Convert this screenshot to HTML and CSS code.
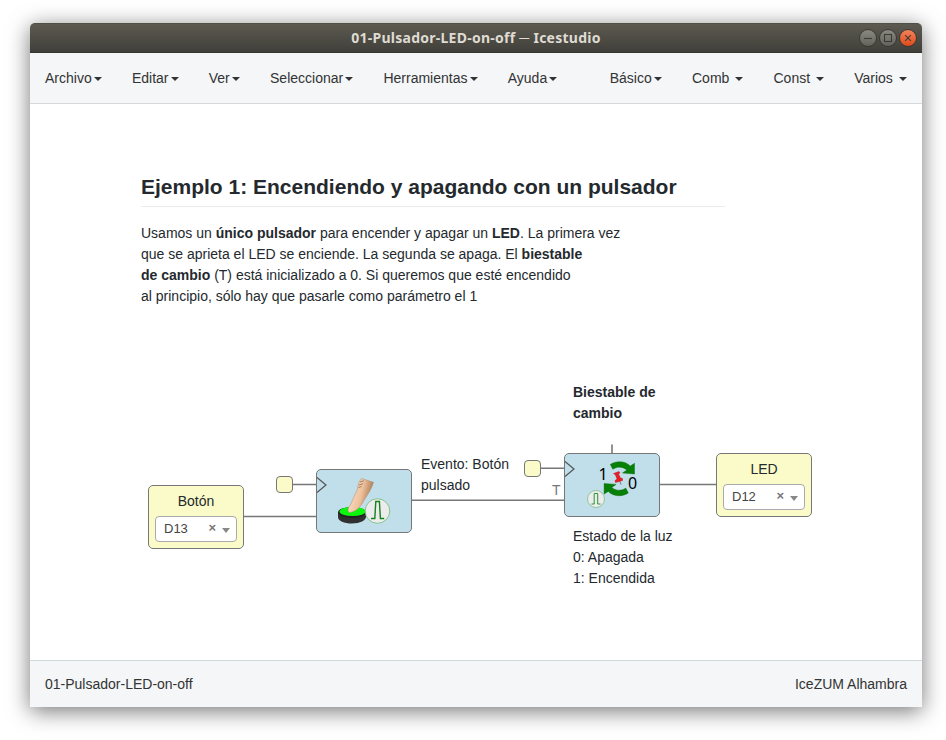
FILE: index.html
```html
<!DOCTYPE html>
<html lang="es">
<head>
<meta charset="utf-8">
<title>01-Pulsador-LED-on-off ─ Icestudio</title>
<link rel="stylesheet" href="styles.css">
</head>
<body>
<div class="window">
  <header class="titlebar">
    <h1 class="titlebar-text">01-Pulsador-LED-on-off ─ Icestudio</h1>
    <div class="controls">
      <svg viewBox="0 0 60 20" width="60" height="20">
        <defs>
          <linearGradient id="grey" x1="0" y1="0" x2="0" y2="1"><stop offset="0" stop-color="#8b8a82"/><stop offset="1" stop-color="#62615a"/></linearGradient>
          <linearGradient id="orange" x1="0" y1="0" x2="0" y2="1"><stop offset="0" stop-color="#f4835e"/><stop offset="1" stop-color="#de4a17"/></linearGradient>
        </defs>
        <g stroke="#383732">
          <circle cx="10" cy="10" r="8.5" fill="url(#grey)"/>
          <circle cx="30" cy="10" r="8.5" fill="url(#grey)"/>
          <circle cx="50" cy="10" r="8.5" fill="url(#orange)"/>
        </g>
        <g fill="none" stroke="#3c3b37" stroke-width="1.1">
          <path d="M6 10.5h8"/>
          <rect x="26.500" y="6.500" width="7" height="7"/>
          <path d="M47.200 7.200l5.600 5.600M52.800 7.200l-5.600 5.600"/>
        </g>
      </svg>
    </div>
  </header>
  <nav class="menubar">
    <ul class="menu">
      <li>Archivo<b class="caret"></b></li>
      <li>Editar<b class="caret"></b></li>
      <li>Ver<b class="caret"></b></li>
      <li>Seleccionar<b class="caret"></b></li>
      <li>Herramientas<b class="caret"></b></li>
      <li>Ayuda<b class="caret"></b></li>
    </ul>
    <ul class="menu">
      <li>Básico<b class="caret"></b></li>
      <li>Comb <b class="caret"></b></li>
      <li>Const <b class="caret"></b></li>
      <li>Varios <b class="caret"></b></li>
    </ul>
  </nav>
  <main class="canvas">
    <svg class="wires" viewBox="0 0 892 556" width="892" height="556">
      <g fill="none" stroke="#777" stroke-width="1.600">
        <path d="M214 412.500H286M262 380.500H286M382 396.300H534M510 364.300H534M630 380.500H686"/>
        <path d="M582 340.500V349"/>
      </g>
    </svg>

    <article class="note intro">
      <h2>Ejemplo 1: Encendiendo y apagando con un pulsador</h2>
      <p>Usamos un <strong>único pulsador</strong> para encender y apagar un <strong>LED</strong>. La primera vez<br>
      que se aprieta el LED se enciende. La segunda se apaga. El <strong>biestable<br>
      de cambio</strong> (T) está inicializado a 0. Si queremos que esté encendido<br>
      al principio, sólo hay que pasarle como parámetro el 1</p>
    </article>
    <p class="note event">Evento: Botón<br>pulsado</p>
    <p class="note toggle"><strong>Biestable de<br>cambio</strong></p>
    <p class="note state">Estado de la luz<br>0: Apagada<br>1: Encendida</p>
    <span class="port-label">T</span>

    <section class="block io button-in">
      <span>Botón</span>
      <div class="select"><span>D13</span><b class="clear">×</b><i class="arrow"></i></div>
    </section>
    <section class="block io led-out">
      <span>LED</span>
      <div class="select"><span>D12</span><b class="clear">×</b><i class="arrow"></i></div>
    </section>
    <div class="clock clock-a"></div>
    <div class="clock clock-b"></div>

    <section class="block logic pulse">
      <svg viewBox="0 0 96 64" width="96" height="64">
        <defs>
          <linearGradient id="skin" x1="0" y1="0" x2="1" y2="0.300"><stop offset="0.200" stop-color="#f8d9bd"/><stop offset="0.600" stop-color="#eec19c"/><stop offset="1" stop-color="#a77955"/></linearGradient>
        </defs>
        <path d="M1 8.500L10 16L1 23.500" fill="none" stroke="#555" stroke-width="1.200"/>
        <path d="M22 43.500v4.500c0 4 6 6.500 14 6.500s14-3 14-7v-4z" fill="#303030"/>
        <ellipse cx="36" cy="43.500" rx="14" ry="5.500" fill="#222"/>
        <ellipse cx="36.500" cy="42.500" rx="13" ry="4.500" fill="#0cf50c"/>
        <path d="M45.500 9.500L57.500 13.300C55.500 21 50.500 27 46.500 34C44 38.500 39 43 33.500 43.500C31 42 32 39 34.500 35.500L41.500 20C42 15 43 12 45.500 9.500z" fill="url(#skin)" stroke="#b08a6b" stroke-width=".5"/>
        <path d="M44 13l4-1.300M43 16l4-1.300M42.500 18.500l3-1" stroke="#7c6555" stroke-width=".7"/>
        <circle cx="61.500" cy="42" r="12.300" fill="#ececec" stroke="#6fba72" stroke-width=".8"/>
        <path d="M55 49.500h3.800l1-17h3.600l1 17h3.800" fill="none" stroke="#14821d" stroke-width="1.400"/>
      </svg>
    </section>
    <section class="block logic flipflop">
      <svg viewBox="0 0 96 64" width="96" height="64">
        <path d="M1 8.500L10 16L1 23.500" fill="none" stroke="#555" stroke-width="1.200"/>
        <g fill="#068006" stroke="#046404" stroke-width=".4">
          <path id="swap" d="M46.300 11.500C52 7.500 61 7.500 66.300 13L70.500 10.300V21L58.500 20L62.800 17C59.500 14 53.500 12.800 48.800 16.300z"/>
          <use href="#swap" transform="rotate(180 55.300 25.700)"/>
        </g>
        <g fill="#ed1c24" stroke="#a80d12" stroke-width=".4">
          <path d="M54.500 25L57 31.500" stroke="#777" stroke-width="1"/>
          <path d="M49.500 20.500L55 18.500L56 20L54.500 21L56.500 25L58.500 25.500L58.500 27.500L51.500 29.500L51 27.500L53 26L51.500 22z"/>
        </g>
        <text class="digit" x="34.500" y="27">1</text>
        <text class="digit" x="64" y="36">0</text>
        <circle cx="32" cy="46" r="8.500" fill="#ececec" stroke="#80bd83" stroke-width=".8"/>
        <path d="M27.500 51h2.700V40.500h3.500V51h2.800" fill="none" stroke="#2c9136"/>
      </svg>
    </section>
  </main>
  <footer class="statusbar"><span>01-Pulsador-LED-on-off</span><span>IceZUM Alhambra</span></footer>
</div>
</body>
</html>
```

FILE: styles.css
```css
* { box-sizing: border-box; }

body {
  margin: 0;
  padding: 23px 24px 33px 30px;
  height: 740px;
  overflow: hidden;
  background: #fff;
  color: #24292e;
  font: 14px/21px "Liberation Sans", Arial, sans-serif;
}

.window {
  display: flex;
  flex-direction: column;
  height: 684px;
  border-radius: 5px 5px 0 0;
  background: #fff;
  box-shadow: 0 4px 22px rgba(0, 0, 0, .55);
}

.titlebar {
  display: grid;
  grid-template-columns: 1fr auto 1fr;
  align-items: center;
  height: 30px;
  border-top: 1px solid #504f45;
  border-bottom: 1px solid #36352f;
  border-radius: 5px 5px 0 0;
  background: linear-gradient(#5c5a50, #403f3a);
}

.titlebar-text {
  grid-column: 2;
  margin: 0;
  color: #dfdbd2;
  font: bold 14px/28px "Noto Sans", "Open Sans", sans-serif;
  letter-spacing: .26px;
  white-space: nowrap;
}

.controls {
  justify-self: end;
  height: 20px;
  padding-right: 4px;
}

.controls svg { display: block; }

.menubar {
  display: flex;
  justify-content: space-between;
  height: 51px;
  border-bottom: 1px solid #d5d8dc;
  background: #f4f6f8;
  color: #333;
}

.menu {
  display: flex;
  margin: 0;
  padding: 0;
  list-style: none;
}

.menu li {
  padding: 15px;
  line-height: 20px;
  white-space: nowrap;
}

.caret {
  display: inline-block;
  margin-left: 2.25px;
  vertical-align: middle;
  border: 4px solid transparent;
  border-top-color: #333;
  border-bottom: 0;
}

.canvas {
  position: relative;
  flex: 1;
}

.wires { display: block; }

.note {
  position: absolute;
  margin: 0;
  white-space: nowrap;
}

.intro { left: 111px; top: 70px; width: 584px; }
.event { left: 391px; top: 350px; }
.toggle { left: 543px; top: 278px; }
.state { left: 543px; top: 422px; }

.intro h2 {
  margin: 0 0 16px;
  padding-bottom: 6px;
  border-bottom: 1px solid #eaecef;
  font-size: 21px;
  line-height: 26px;
}

.intro p { margin: 0; }

.port-label {
  position: absolute;
  left: 522px;
  top: 376px;
  color: #777;
}

.block {
  position: absolute;
  width: 96px;
  height: 64px;
  border: 1px solid #777;
  border-radius: 5px;
}

.io {
  padding: 5px 6px;
  background: #fbfbc9;
  text-align: center;
}

.button-in { left: 118px; top: 381px; }
.led-out { left: 686px; top: 349px; }

.select {
  display: flex;
  align-items: center;
  height: 26px;
  margin-top: 4px;
  padding: 0 6px 0 8px;
  border: 1px solid #aaa;
  border-radius: 4px;
  background: #fff;
  color: #444;
  font-size: 13px;
}

.select span { margin-top: -1px; }

.clear {
  margin: -3px 0 0 auto;
  color: #777;
  font-size: 13px;
}

.arrow {
  margin: 3px 0 0 6px;
  border: 4px solid transparent;
  border-top: 5px solid #888;
  border-bottom: 0;
}

.clock {
  position: absolute;
  width: 17px;
  height: 17px;
  border: 1px solid #777;
  border-radius: 4px;
  background: #fbfbc9;
}

.clock-a { left: 246px; top: 372px; }
.clock-b { left: 494px; top: 356px; }

.logic { background: #c0dfeb; }
.logic svg { display: block; margin: -1px; }
.pulse { left: 286px; top: 365px; }
.flipflop { left: 534px; top: 349px; }

.digit {
  fill: #000;
  font: 16px "Noto Sans", sans-serif;
}

.statusbar {
  display: flex;
  justify-content: space-between;
  height: 47px;
  padding: 13px 15px;
  border-top: 1px solid #cfd8dc;
  background: #f4f6f8;
  color: #333;
}
```
